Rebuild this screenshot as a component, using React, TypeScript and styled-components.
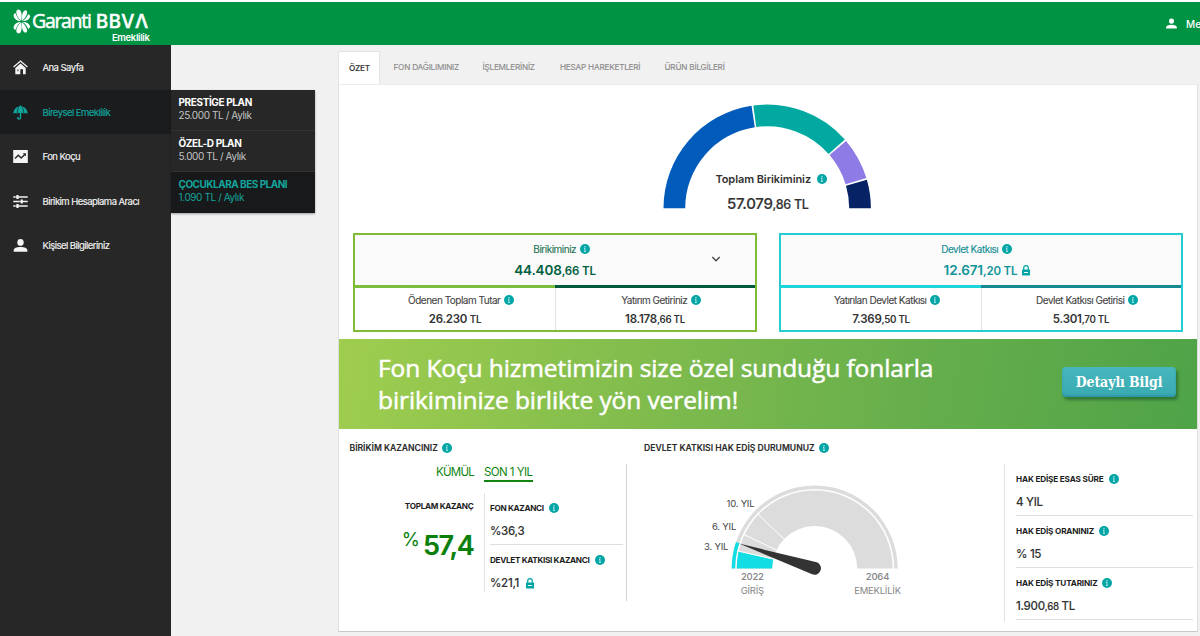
import React from "react";
import styled, { createGlobalStyle, css } from "styled-components";

const teal = "#02a5a5";

const GlobalStyle = createGlobalStyle`
  * { box-sizing: border-box; }
  body { margin: 0; background: #f1f1f1; overflow: hidden; font-family: Inter, "Liberation Sans", sans-serif; color: #333; }
`;

const Page = styled.div`
  width: 1200px;
  height: 636px;
  overflow: hidden;
  display: flex;
  flex-direction: column;
`;

const Header = styled.header`
  height: 45px;
  flex: none;
  border-top: 2px solid #fff;
  background: #009344;
  display: flex;
  justify-content: space-between;
  overflow: hidden;
`;

const Brand = styled.div`
  width: 149.5px;
  padding: 7px 0 0 13px;
  display: flex;
  flex-direction: column;
`;

const BrandRow = styled.div`
  display: flex;
  align-items: center;
  height: 24px;
  color: #fff;
  white-space: nowrap;
`;

const BrandName = styled.span`
  margin-left: 1px;
  width: 64px;
  font: 500 19.5px/24px "Open Sans", sans-serif;
  letter-spacing: -1.3px;
  -webkit-text-stroke: 0.5px #fff;
`;

const BrandGroup = styled.span`
  font: 500 18.5px/24px Inter, sans-serif;
  letter-spacing: 0.5px;
  -webkit-text-stroke: 0.5px #fff;
`;

const BrandUnit = styled.span`
  align-self: flex-end;
  color: #fff;
  font-size: 9.5px;
  font-weight: 600;
  line-height: 10px;
  letter-spacing: -0.35px;
`;

const Account = styled.div`
  width: 34px;
  display: flex;
  align-items: center;
  gap: 9px;
  color: #fff;
  font-size: 10px;
  font-weight: 500;
  white-space: nowrap;
  svg { flex: none; }
`;

const Body = styled.div`
  flex: 1;
  display: flex;
  align-items: flex-start;
`;

const Sidebar = styled.nav`
  width: 171px;
  height: 591px;
  background: #272727;
  flex: none;
`;

const NavItem = styled.a<{ $active?: boolean }>`
  display: flex;
  align-items: center;
  gap: 14.5px;
  height: 44.5px;
  padding: 1px 0 0 13px;
  font-size: 9.5px;
  letter-spacing: -0.54px;
  white-space: nowrap;
  color: ${(p) => (p.$active ? "#0fa79d" : "#f4f4f4")};
  -webkit-text-stroke: 0.15px currentColor;
  background: ${(p) => (p.$active ? "#1b1c1e" : "transparent")};
`;

const PlanMenu = styled.div`
  width: 143.5px;
  margin-top: 45px;
  flex: none;
  background: #272727;
  box-shadow: 0 1px 2px rgba(0, 0, 0, 0.35);
`;

const Plan = styled.div<{ $active?: boolean }>`
  height: 41px;
  padding: 6px 0 0 7.5px;
  border-bottom: 1px solid #333;
  font-size: 10px;
  line-height: 13px;
  letter-spacing: -0.4px;
  color: ${(p) => (p.$active ? "#14a59b" : "#c4c4c4")};
  background: ${(p) => (p.$active ? "#18191b" : "transparent")};
  ${(p) => p.$active && css`border-bottom-color: #18191b;`}
`;

const PlanName = styled.div<{ $active?: boolean }>`
  font-weight: 700;
  letter-spacing: ${(p) => (p.$active ? -0.5 : -0.38)}px;
  color: ${(p) => (p.$active ? "#14a59b" : "#fff")};
`;

const Main = styled.main`
  width: 859.5px;
  margin: 6px 0 0 23.5px;
  flex: none;
`;

const Tabs = styled.div`
  display: flex;
  align-items: stretch;
  height: 33px;
`;

const Tab = styled.div<{ $w: number; $active?: boolean }>`
  width: ${(p) => p.$w}px;
  padding-left: ${(p) => (p.$active ? 10 : 0)}px;
  font-size: 8.2px;
  line-height: ${(p) => (p.$active ? 32 : 33)}px;
  letter-spacing: -0.22px;
  white-space: nowrap;
  color: ${(p) => (p.$active ? "#333" : "#8c8c8c")};
  font-weight: ${(p) => (p.$active ? 500 : 400)};
  -webkit-text-stroke: 0.15px currentColor;
  ${(p) =>
    p.$active
      ? css`background: #fff; border: 1px solid #e4e4e4; border-bottom: 0; margin-right: 13.5px;`
      : css`margin-right: 24px;`}
`;

const Card = styled.section`
  height: 548px;
  background: #fff;
  border: 1px solid #dedede;
  border-top-color: #ebebeb;
  border-bottom: 1px solid #c9c9c9;
  display: flex;
  flex-direction: column;
`;

const Total = styled.div`
  position: relative;
  height: 148px;
  flex: none;
  padding: 18px 1px 0 0;
  display: flex;
  justify-content: center;
`;

const TotalCaption = styled.div`
  position: absolute;
  top: 86px;
  left: 0;
  right: 0;
  display: flex;
  flex-direction: column;
  align-items: center;
`;

const TotalLabel = styled.div`
  display: flex;
  align-items: center;
  gap: 6px;
  margin-left: 7px;
  height: 16px;
  font-size: 11px;
  font-weight: 600;
  letter-spacing: -0.08px;
`;

const TotalValue = styled.div`
  margin-top: 7px;
  font-size: 15px;
  line-height: 20px;
  font-weight: 500;
  letter-spacing: -0.3px;
  -webkit-text-stroke: 0.2px currentColor;
  small { font-size: 12.5px; }
`;

const Boxes = styled.div`
  display: flex;
  gap: 22px;
  padding-left: 14px;
  height: 106px;
  flex: none;
`;

const Box = styled.div<{ $line: string }>`
  width: 404px;
  height: 99px;
  border: 2px solid ${(p) => p.$line};
  display: flex;
  flex-direction: column;
`;

const BoxTop = styled.div<{ $label: string; $value: string }>`
  position: relative;
  height: 50px;
  background: #fafafa;
  display: flex;
  flex-direction: column;
  align-items: center;
  padding-top: 6px;
  color: ${(p) => p.$label};
  strong { color: ${(p) => p.$value}; }
`;

const Label = styled.div<{ $shift?: number }>`
  display: flex;
  align-items: center;
  gap: 3.5px;
  margin-left: ${(p) => p.$shift ?? 12}px;
  font-size: 10px;
  line-height: 16px;
  letter-spacing: -0.5px;
  white-space: nowrap;
  -webkit-text-stroke: 0.1px currentColor;
`;

const Amount = styled.strong`
  display: flex;
  align-items: center;
  gap: 5px;
  margin-top: 4px;
  font-size: 13.5px;
  line-height: 18px;
  font-weight: 600;
  letter-spacing: -0.15px;
  small { font-size: 11.5px; }
  &:has(svg) { margin-left: 12px; }
`;

const ChevronSlot = styled.span`
  position: absolute;
  right: 34px;
  top: 17px;
  display: flex;
`;

const Split = styled.div`
  display: flex;
  flex: 1;
`;

const Half = styled.div<{ $bar: string }>`
  flex: 1;
  border-top: 3px solid ${(p) => p.$bar};
  display: flex;
  flex-direction: column;
  align-items: center;
  padding-top: 4px;
  color: #444;
  & + & { box-shadow: inset 1px 0 0 #e2e2e2; }
`;

const SmallAmount = styled.div`
  margin-top: 3px;
  font-size: 11.5px;
  line-height: 16px;
  font-weight: 600;
  letter-spacing: -0.25px;
  color: #333;
  small { font-size: 9.7px; }
`;

const Banner = styled.div`
  height: 90px;
  flex: none;
  display: flex;
  justify-content: space-between;
  background: linear-gradient(100deg, #9fcd4f 0%, #7fbb4d 38%, #66ae4c 68%, #4fa348 100%);
`;

const BannerText = styled.p`
  margin: 13px 0 0 39px;
  font: 500 24.5px/32px "Open Sans", sans-serif;
  letter-spacing: -0.09px;
  -webkit-text-stroke: 0.5px #fff;
  color: #fff;
  white-space: nowrap;
`;

const BannerButton = styled.button`
  width: 114px;
  height: 30px;
  margin: 28px 21px 0 0;
  padding: 0 0 0 1px;
  border: 0;
  border-radius: 4px;
  background: linear-gradient(#47b7bd, #3aaab2);
  box-shadow: 2px 3px 3px rgba(20, 80, 40, 0.55), inset 0 -2px 2px rgba(30, 120, 150, 0.4);
  color: #fff;
  font: 700 14px/30px "DejaVu Serif Condensed", "DejaVu Serif", serif;
  letter-spacing: -0.1px;
  white-space: nowrap;
`;

const Bottom = styled.div`
  flex: 1;
  display: grid;
  grid-template-columns: 288px 377px 1fr;
  padding-top: 11px;
`;

const Column = styled.div`
  display: flex;
  flex-direction: column;
`;

const SectionTitle = styled.h2<{ $indent: number }>`
  display: flex;
  align-items: center;
  gap: 4px;
  height: 16px;
  margin: 0 0 8px;
  padding-left: ${(p) => p.$indent}px;
  font-size: 8.6px;
  font-weight: 600;
  letter-spacing: -0.01px;
  white-space: nowrap;
  color: #2b2b2b;
  -webkit-text-stroke: 0.1px currentColor;
`;

const Earnings = styled.div`
  width: 288px;
  height: 137px;
  border-right: 1px solid #d5d5d5;
`;

const Periods = styled.div`
  display: flex;
  gap: 10px;
  padding-left: 97px;
  height: 29px;
`;

const Period = styled.span<{ $active?: boolean }>`
  height: 18px;
  font-size: 11.5px;
  line-height: 16px;
  letter-spacing: -0.75px;
  white-space: nowrap;
  color: #118511;
  ${(p) => p.$active && css`width: 49px; border-bottom: 2px solid #118511; letter-spacing: -0.55px;`}
`;

const EarningsRow = styled.div`
  display: flex;
`;

const TotalEarning = styled.div`
  width: 146px;
  height: 99px;
  padding: 5px 10.5px 0 0;
  border-right: 1px solid #e2e2e2;
  display: flex;
  flex-direction: column;
  align-items: flex-end;
`;

const Caption = styled.div<{ $tight?: boolean }>`
  display: flex;
  align-items: center;
  gap: ${(p) => (p.$tight ? 5.5 : 5)}px;
  height: 16px;
  font-size: 8.2px;
  font-weight: 700;
  letter-spacing: ${(p) => (p.$tight ? -0.33 : -0.17)}px;
  white-space: nowrap;
  color: #1d1d1d;
`;

const Percent = styled.div`
  display: flex;
  gap: 3px;
  margin-top: 15px;
  color: #0a800a;
  font-size: 27px;
  font-weight: 600;
  line-height: 34px;
  letter-spacing: -1.3px;
  -webkit-text-stroke: 0.2px currentColor;
  span { font-size: 18.5px; font-weight: 400; line-height: 20px; letter-spacing: 0; -webkit-text-stroke: 0; }
`;

const Details = styled.div`
  padding: 7px 0 0 5px;
  width: 138px;
`;

const Stat = styled.div<{ $open?: boolean }>`
  height: 45px;
  margin-bottom: 7.3px;
  border-bottom: 1px solid ${(p) => (p.$open ? "transparent" : "#dfdfdf")};
`;

const StatValue = styled.div`
  display: flex;
  align-items: center;
  gap: 6.5px;
  margin-top: 7px;
  height: 16px;
  font-size: 11.5px;
  font-weight: 500;
  letter-spacing: -0.3px;
  -webkit-text-stroke: 0.1px currentColor;
  small { font-size: 9.7px; }
`;

const Vesting = styled.div`
  margin-top: 24px;
  height: 158px;
  padding: 6.5px 4px 0 11px;
  border-left: 1px solid #e2e2e2;
`;

const Info = ({ size = 10 }: { size?: number }) => (
  <svg width={size} height={size} viewBox="0 0 10 10" style={{ flex: "none" }}>
    <circle cx="5" cy="5" r="5" fill={teal} />
    <rect x="4.4" y="2.2" width="1.1" height="1.2" fill="#e6ffff" />
    <path d="M4.950 4.200v3.500M4.200 4.500h.8M4.100 7.400h1.700" fill="none" stroke="#d9f6f6" strokeWidth=".8" />
  </svg>
);

const Lock = ({ color = teal }: { color?: string }) => (
  <svg width="8" height="11" viewBox="0 0 8 11" style={{ flex: "none" }}>
    <path d="M1.700 5V3a2.300 2.300 0 0 1 4.600 0v2" fill="none" stroke={color} strokeWidth="1.200" />
    <rect x="0" y="4.600" width="8" height="5.900" rx=".4" fill={color} />
    <rect x="2.100" y="7" width="3.800" height="1" fill="#fff" />
  </svg>
);

const Clover = () => (
  <svg width="18" height="25" viewBox="0 0 18 25" style={{ flex: "none" }}>
    <g fill="#fff">
      <path d="M8.300 11.800C5.300 9.700 3.200 6.300 3.300 3.300 3.300 1.500 4.700.3 6.200.7c2.400.7 3 5.300 2.100 11.100z" />
      <path d="M7.700 12C4.500 12.200.9 9.700.6 6.700.5 4.900 1.600 4 2.700 4.400 3.600 7.600 5.400 10.200 7.700 12z" />
      <path d="M9.200 11.700C8.500 6.500 9.500 2.300 11.900 1.400c1.500-.4 2.500.7 2.200 2.500C13.600 6.800 11.700 9.500 9.200 11.700z" />
      <path d="M9.700 12.100C12.500 10.100 14.400 7.700 15 5.300c1.600.2 2.400 1.300 2 2.700-.7 2.600-3.700 4.200-7.300 4.100z" />
      <path d="M8.300 13.200C5.300 15.300 3.200 18.700 3.300 21.700c0 1.800 1.400 3 2.900 2.600 2.400-.7 3-5.300 2.100-11.100z" />
      <path d="M7.700 13C4.500 12.800.9 15.300.6 18.300c-.1 1.800 1 2.700 2.100 2.300C3.600 17.400 5.400 14.800 7.700 13z" />
      <path d="M9.200 13.300c-.7 5.200.3 9.400 2.700 10.300 1.500.4 2.500-.7 2.200-2.500-.5-2.900-2.400-5.600-4.900-7.800z" />
      <path d="M9.700 12.900c2.800 2 4.700 4.400 5.300 6.800 1.600-.2 2.400-1.300 2-2.700-.7-2.600-3.700-4.200-7.300-4.100z" />
    </g>
  </svg>
);

const Person = ({ w, h }: { w: number; h: number }) => (
  <svg width={w} height={h} viewBox="0 0 14 13">
    <ellipse cx="7" cy="3.400" rx="3.200" ry="3.400" fill="currentColor" />
    <path d="M.2 12.800v-1.500C.2 9.200 3 8 7 8s6.800 1.200 6.800 3.300v1.500z" fill="currentColor" />
  </svg>
);

const HomeIcon = () => (
  <svg width="15" height="15" viewBox="0 0 15 15">
    <path d="M.6 7.100 7.500 1l6.900 6.100" fill="none" stroke="#f4f4f4" strokeWidth="1.300" />
    <path d="M2.300 7.900 7.500 3.400l5.200 4.500V14.200H10V9.300H7.300V14.200H2.300z" fill="#f4f4f4" />
    <rect x="4" y="9.300" width="1.800" height="2" fill="#8a8a8a" />
  </svg>
);

const UmbrellaIcon = () => (
  <svg width="15" height="15" viewBox="0 0 15 15">
    <path d="M.4 8.900C.5 4.300 3.400 1.600 7.500 1.600s7 2.700 7.100 7.300Q12.600 7.300 10.800 8.700 9.200 7.300 7.500 8 5.800 7.300 4.200 8.700 2.400 7.300.4 8.900z" fill="#0fa79d" />
    <path d="M7.500.4v12.300a1.400 1.400 0 0 1-2.800 0v-.6" fill="none" stroke="#0fa79d" strokeWidth="1.400" />
    <path d="M5.700 2.500Q4 5 4.200 8.500M9.300 2.500Q11 5 10.800 8.500" fill="none" stroke="#1b1c1e" strokeWidth=".7" />
  </svg>
);

const FundIcon = () => (
  <svg width="15" height="13" viewBox="0 0 15 13">
    <rect x=".2" y="0" width="14.600" height="13" fill="#f4f4f4" />
    <path d="M2 8.600 5.300 5.200l2.900 2.900L12 4.200" fill="none" stroke="#272727" strokeWidth="1.400" />
    <path d="M9.700 3.300h3.200v3.200z" fill="#272727" />
  </svg>
);

const SlidersIcon = () => (
  <svg width="15" height="13" viewBox="0 0 15 13" stroke="#f4f4f4">
    <path d="M.3 2H2.700M3.200 2H14.700M.3 6.500H6.800M7.300 6.500H14.700M.3 11H2.700M3.200 11H14.700" strokeWidth="1.500" />
    <path d="M4.500 0V4M8.700 4.500V8.500M4.500 9V13" strokeWidth="2.200" />
  </svg>
);

const polar = (cx: number, cy: number, r: number, deg: number) => {
  const a = (deg * Math.PI) / 180;
  return `${(cx - r * Math.cos(a)).toFixed(2)} ${(cy - r * Math.sin(a)).toFixed(2)}`;
};

/* Ring slice; angles run clockwise from the left end of the half circle. */
const slice = (cx: number, cy: number, ro: number, ri: number, from: number, to: number) =>
  `M${polar(cx, cy, ro, from)}A${ro} ${ro} 0 0 1 ${polar(cx, cy, ro, to)}L${polar(cx, cy, ri, to)}A${ri} ${ri} 0 0 0 ${polar(cx, cy, ri, from)}Z`;

const Donut = () => {
  const parts: [number, number, string][] = [
    [0, 81.3, "#005bbb"],
    [82.3, 138.5, "#02a9a1"],
    [139.5, 163, "#8f7be6"],
    [164, 180, "#072365"],
  ];
  return (
    <svg width="208" height="106" viewBox="0 0 208 106">
      {parts.map(([a, b, c]) => (
        <path key={c} d={slice(104.2, 105.3, 103.7, 82, a, b)} fill={c} />
      ))}
    </svg>
  );
};

const GaugeLabel = styled.text<{ $muted?: boolean; $bold?: boolean }>`
  font-size: 9.5px;
  letter-spacing: -0.22px;
  font-weight: ${(p) => (p.$bold ? 500 : 400)};
  fill: ${(p) => (p.$muted ? "#858585" : "#444")};
`;

/* Local origin of the drawing is the top left of the gauge column. */
const Gauge = () => {
  const cx = 187.7;
  const cy = 104.5;
  return (
    <svg width="377" height="137" viewBox="0 0 377 137">
      <path d={slice(cx, cy, 83, 79.5, 0, 180)} fill="#dcdcdc" />
      <path d={slice(cx, cy, 83, 79.5, 0, 18.6)} fill="#12dde5" />
      <path d={slice(cx, cy, 78, 42.5, 0, 180)} fill="#dcdcdc" />
      <path d={slice(cx, cy, 78, 42.5, 0, 12.5)} fill="#12dde5" />
      {[12.8, 25.7, 43.8].map((d) => (
        <path key={d} d={`M${polar(cx, cy, 79.5, d)}L${polar(cx, cy, 42, d)}`} stroke="#fff" strokeWidth="1" />
      ))}
      <path d="M112 79.600 189.800 98.300A6.400 6.400 0 1 1 185.200 110.300Z" fill="#333" />
      <GaugeLabel x="99.500" y="43">10. YIL</GaugeLabel>
      <GaugeLabel x="85" y="66">6. YIL</GaugeLabel>
      <GaugeLabel x="77" y="86">3. YIL</GaugeLabel>
      <GaugeLabel x="125.300" y="116" textAnchor="middle" $muted $bold>2022</GaugeLabel>
      <GaugeLabel x="125.300" y="129.500" textAnchor="middle" $muted>GİRİŞ</GaugeLabel>
      <GaugeLabel x="250.500" y="116" textAnchor="middle" $muted $bold>2064</GaugeLabel>
      <GaugeLabel x="250.500" y="129.500" textAnchor="middle" $muted>EMEKLİLİK</GaugeLabel>
    </svg>
  );
};

export default function App() {
  return (
    <Page>
      <GlobalStyle />
      <Header>
        <Brand>
          <BrandRow>
            <Clover />
            <BrandName>Garanti</BrandName>
            <BrandGroup>BBVΛ</BrandGroup>
          </BrandRow>
          <BrandUnit>Emeklilik</BrandUnit>
        </Brand>
        <Account>
          <Person w={11} h={11} />
          Me
        </Account>
      </Header>
      <Body>
        <Sidebar>
          <NavItem><HomeIcon />Ana Sayfa</NavItem>
          <NavItem $active><UmbrellaIcon />Bireysel Emeklilik</NavItem>
          <NavItem><FundIcon />Fon Koçu</NavItem>
          <NavItem><SlidersIcon />Birikim Hesaplama Aracı</NavItem>
          <NavItem><Person w={15} h={13} />Kişisel Bilgileriniz</NavItem>
        </Sidebar>
        <PlanMenu>
          <Plan><PlanName>PRESTİGE PLAN</PlanName>25.000 TL / Aylık</Plan>
          <Plan><PlanName>ÖZEL-D PLAN</PlanName>5.000 TL / Aylık</Plan>
          <Plan $active><PlanName $active>ÇOCUKLARA BES PLANI</PlanName>1.090 TL / Aylık</Plan>
        </PlanMenu>
        <Main>
          <Tabs>
            <Tab $w={42} $active>ÖZET</Tab>
            <Tab $w={65}>FON DAĞILIMINIZ</Tab>
            <Tab $w={53.5}>İŞLEMLERİNİZ</Tab>
            <Tab $w={80.5}>HESAP HAREKETLERİ</Tab>
            <Tab $w={60}>ÜRÜN BİLGİLERİ</Tab>
          </Tabs>
          <Card>
            <Total>
              <Donut />
              <TotalCaption>
                <TotalLabel>Toplam Birikiminiz <Info /></TotalLabel>
                <TotalValue>57.079<small>,86 TL</small></TotalValue>
              </TotalCaption>
            </Total>
            <Boxes>
              <Box $line="#80bb35">
                <BoxTop $label="#1a7351" $value="#005f3f">
                  <Label $shift={13}>Birikiminiz <Info /></Label>
                  <Amount><span>44.408<small>,66 TL</small></span></Amount>
                  <ChevronSlot>
                    <svg width="10" height="14" viewBox="0 0 10 14">
                      <path d="M1.300 5 5 8.800 8.700 5" fill="none" stroke="#444" strokeWidth="1.300" />
                    </svg>
                  </ChevronSlot>
                </BoxTop>
                <Split>
                  <Half $bar="#7cbd3b">
                    <Label>Ödenen Toplam Tutar <Info /></Label>
                    <SmallAmount>26.230 <small>TL</small></SmallAmount>
                  </Half>
                  <Half $bar="#00593c">
                    <Label>Yatırım Getiriniz <Info /></Label>
                    <SmallAmount>18.178<small>,66 TL</small></SmallAmount>
                  </Half>
                </Split>
              </Box>
              <Box $line="#25cdd2">
                <BoxTop $label="#0f8d92" $value="#0f9499">
                  <Label $shift={-9}>Devlet Katkısı <Info /></Label>
                  <Amount><span>12.671<small>,20 TL</small></span><Lock /></Amount>
                </BoxTop>
                <Split>
                  <Half $bar="#1dd6dc">
                    <Label>Yatırılan Devlet Katkısı <Info /></Label>
                    <SmallAmount>7.369<small>,50 TL</small></SmallAmount>
                  </Half>
                  <Half $bar="#148a90">
                    <Label>Devlet Katkısı Getirisi <Info /></Label>
                    <SmallAmount>5.301<small>,70 TL</small></SmallAmount>
                  </Half>
                </Split>
              </Box>
            </Boxes>
            <Banner>
              <BannerText>
                Fon Koçu hizmetimizin size özel sunduğu fonlarla
                <br />
                birikiminize birlikte yön verelim!
              </BannerText>
              <BannerButton>Detaylı Bilgi</BannerButton>
            </Banner>
            <Bottom>
              <Column>
                <SectionTitle $indent={10.5}>BİRİKİM KAZANCINIZ <Info /></SectionTitle>
                <Earnings>
                  <Periods>
                    <Period>KÜMÜL</Period>
                    <Period $active>SON 1 YIL</Period>
                  </Periods>
                  <EarningsRow>
                    <TotalEarning>
                      <Caption $tight>TOPLAM KAZANÇ</Caption>
                      <Percent><span>%</span>57,4</Percent>
                    </TotalEarning>
                    <Details>
                      <Stat>
                        <Caption $tight>FON KAZANCI <Info /></Caption>
                        <StatValue>%36,3</StatValue>
                      </Stat>
                      <Stat $open>
                        <Caption $tight>DEVLET KATKISI KAZANCI <Info /></Caption>
                        <StatValue>%21,1 <Lock /></StatValue>
                      </Stat>
                    </Details>
                  </EarningsRow>
                </Earnings>
              </Column>
              <Column>
                <SectionTitle $indent={17}>DEVLET KATKISI HAK EDİŞ DURUMUNUZ <Info /></SectionTitle>
                <Gauge />
              </Column>
              <Vesting>
                <Stat>
                  <Caption>HAK EDİŞE ESAS SÜRE <Info /></Caption>
                  <StatValue>4 YIL</StatValue>
                </Stat>
                <Stat>
                  <Caption>HAK EDİŞ ORANINIZ <Info /></Caption>
                  <StatValue>% 15</StatValue>
                </Stat>
                <Stat>
                  <Caption>HAK EDİŞ TUTARINIZ <Info /></Caption>
                  <StatValue><span>1.900<small>,68</small> TL</span></StatValue>
                </Stat>
              </Vesting>
            </Bottom>
          </Card>
        </Main>
      </Body>
    </Page>
  );
}
